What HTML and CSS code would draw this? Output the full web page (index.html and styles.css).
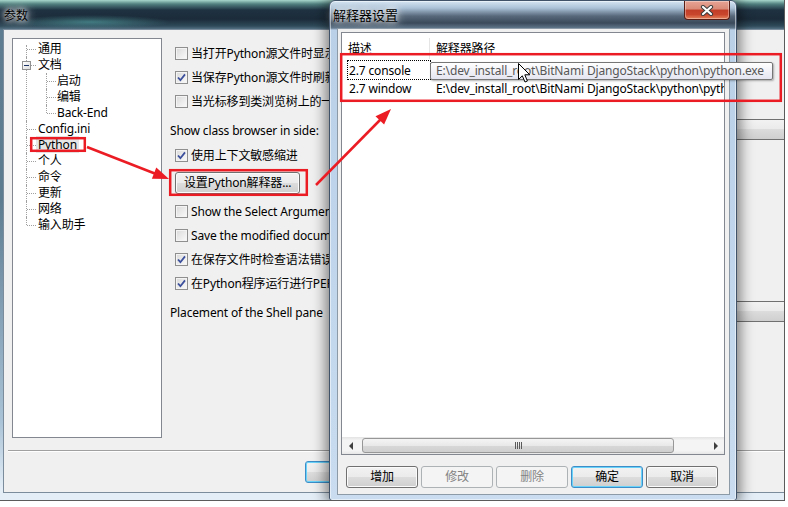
FILE: index.html
```html
<!DOCTYPE html>
<html lang="zh-CN">
<head>
  <meta charset="UTF-8">
  <title>参数 – 解释器设置</title>
  <link rel="stylesheet" href="styles.css">
</head>
<body>

  <div class="desktop">

    <!-- 主窗口：参数 -->
    <div class="window main-window">
      <div class="titlebar">
        <span class="title">参数</span>
      </div>
      <div class="client">
        <div class="panes">

          <!-- 左侧设置树 -->
          <div class="tree">
            <ul class="tree-root">
              <li><span class="label">通用</span></li>
              <li>
                <span class="expander"></span>
                <span class="label">文档</span>
                <ul class="tree-children">
                  <li><span class="label">启动</span></li>
                  <li><span class="label">编辑</span></li>
                  <li><span class="label">Back-End</span></li>
                </ul>
              </li>
              <li><span class="label">Config.ini</span></li>
              <li><span class="label selected">Python</span></li>
              <li><span class="label">个人</span></li>
              <li><span class="label">命令</span></li>
              <li><span class="label">更新</span></li>
              <li><span class="label">网络</span></li>
              <li><span class="label">输入助手</span></li>
            </ul>
          </div>

          <!-- 右侧 Python 选项 -->
          <div class="options">
            <div class="check"><span class="box"></span>当打开Python源文件时显示类浏览窗口</div>
            <div class="check"><span class="box"><svg viewBox="0 0 11 11"><path d="M2 5.5 L4.4 8.2 L9 2.4"/></svg></span>当保存Python源文件时刷新类浏览窗口</div>
            <div class="check"><span class="box"></span>当光标移到类浏览树上的一个节点时显示提示</div>
            <div class="field">
              <span>Show class browser in side:</span>
              <span class="combo"></span>
            </div>
            <div class="check"><span class="box"><svg viewBox="0 0 11 11"><path d="M2 5.5 L4.4 8.2 L9 2.4"/></svg></span>使用上下文敏感缩进</div>
            <button class="btn btn-wide">设置Python解释器...</button>
            <div class="check"><span class="box"></span>Show the Select Arguments dialog</div>
            <div class="check"><span class="box"></span>Save the modified documents before running</div>
            <div class="check"><span class="box"><svg viewBox="0 0 11 11"><path d="M2 5.5 L4.4 8.2 L9 2.4"/></svg></span>在保存文件时检查语法错误</div>
            <div class="check"><span class="box"><svg viewBox="0 0 11 11"><path d="M2 5.5 L4.4 8.2 L9 2.4"/></svg></span>在Python程序运行进行PEP8检查</div>
            <div class="field">
              <span>Placement of the Shell pane</span>
              <span class="combo"></span>
            </div>
          </div>
        </div>

        <div class="separator"></div>
        <div class="footer">
          <button class="btn default">确定</button>
          <button class="btn">取消</button>
          <button class="btn">应用</button>
        </div>
      </div>
    </div>

    <!-- 对话框：解释器设置 -->
    <div class="window dialog">
      <div class="titlebar">
        <span class="title">解释器设置</span>
        <span class="close">
          <svg viewBox="0 0 14 11" width="14" height="11">
            <path class="x-outline" d="M3 2 L11 9 M11 2 L3 9"/>
            <path class="x-fill" d="M3 2 L11 9 M11 2 L3 9"/>
          </svg>
        </span>
      </div>
      <div class="client">
        <div class="list">
          <div class="list-header">
            <span class="col-name">描述</span>
            <span class="col-path">解释器路径</span>
          </div>
          <div class="list-body">
            <div class="row focused">
              <span class="col-name">2.7 console</span>
              <span class="col-path">E:\dev_install_root\BitNami DjangoStack\python\python.exe</span>
            </div>
            <div class="row">
              <span class="col-name">2.7 window</span>
              <span class="col-path">E:\dev_install_root\BitNami DjangoStack\python\pythonw.exe</span>
            </div>
          </div>
          <div class="hscroll">
            <span class="arrow arrow-left"></span>
            <span class="track"><span class="thumb"><span class="grip"></span></span></span>
            <span class="arrow arrow-right"></span>
          </div>
        </div>
        <div class="dialog-buttons">
          <button class="btn">增加</button>
          <button class="btn" disabled>修改</button>
          <button class="btn" disabled>删除</button>
          <button class="btn default">确定</button>
          <button class="btn">取消</button>
        </div>
      </div>
    </div>

    <!-- 悬停提示和鼠标 -->
    <div class="tooltip">E:\dev_install_root\BitNami DjangoStack\python\python.exe</div>
    <svg class="cursor" width="13" height="20" viewBox="0 0 13 20">
      <path d="M0.5 0.5 L0.5 16.5 L4.3 12.8 L7 19 L9.4 18 L6.8 11.8 L11.8 11.8 Z"/>
    </svg>

    <!-- 红色标注 -->
    <svg class="annotations" width="784" height="500" viewBox="0 0 784 500">
      <rect x="31.2" y="138.2" width="53.6" height="12.6"/>
      <rect x="170.2" y="170.2" width="136.6" height="24.6"/>
      <rect x="341.2" y="54.2" width="439.6" height="46.6"/>
      <line x1="87" y1="147" x2="156" y2="174"/>
      <polygon points="169,179 151.9,178.8 156.3,167.6"/>
      <line x1="316" y1="185" x2="381" y2="119"/>
      <polygon points="391,109 384.1,124.6 375.5,116.2"/>
    </svg>

  </div>

</body>
</html>
```

FILE: styles.css
```css
body {
  margin: 0;
  background-color: #ffffff;
  font-family: "Noto Sans", "Noto Sans CJK SC", sans-serif;
  font-size: 12px;
  letter-spacing: -0.15px;
  color: #000000;
}

.desktop {
  position: relative;
  width: 784px;
  height: 500px;
  overflow: hidden;
  border-right: 1px solid #5b5b5b;
  border-bottom: 1px solid #5b5b5b;
  background-color: #1a2a36;
}

/* Aero 窗口 */
.window {
  position: absolute;
  display: flex;
  flex-direction: column;
  box-sizing: border-box;
}

.titlebar {
  display: flex;
  align-items: center;
  flex-shrink: 0;
}

.title {
  color: #000000;
  letter-spacing: 0;
  text-shadow: 0 0 5px #ffffff, 0 0 9px rgba(255, 255, 255, 0.85), 0 0 13px rgba(255, 255, 255, 0.6);
}

.main-window {
  left: 0;
  top: 0;
  width: 800px;
  height: 500px;
  padding: 0 3px 7px 3px;
  background:
    radial-gradient(80px 7px at 90px 22px, rgba(90, 175, 175, 0.55), transparent),
    linear-gradient(to bottom, #a8d8cc 0, #51807f 4px, #1f3242 10px, #1b2b39 19px, #2f4a5a 26px, #5f7d90 30px, #5d7c90 200px, #a9c2d6 420px, #e4eef7 490px);
}

.main-window .titlebar {
  height: 29px;
  margin: 0 -3px;
  padding-left: 4px;
}

.main-window .client {
  flex: 1;
  display: flex;
  flex-direction: column;
  border: 1px solid #7b8c9c;
  background-color: #f0f0f0;
}

.panes {
  display: flex;
  gap: 8px;
  padding: 8px 0 0 8px;
}

/* 设置树 */
.tree {
  width: 150px;
  height: 400px;
  box-sizing: border-box;
  flex-shrink: 0;
  border: 1px solid #828790;
  background-color: #ffffff;
}

.tree ul {
  list-style: none;
  margin: 0;
  padding: 0;
}

.tree-root {
  padding-top: 2px !important;
}

.tree li {
  position: relative;
  line-height: 16px;
  white-space: nowrap;
}

.tree-root > li {
  padding-left: 25px;
}

.tree-root > li::before {
  content: "";
  position: absolute;
  left: 13px;
  top: 0;
  bottom: 0;
  border-left: 1px dotted #a0a0a0;
}

.tree-root > li:first-child::before {
  top: 4px;
}

.tree-root > li:last-child::before {
  bottom: auto;
  height: 8px;
}

.tree-root > li::after {
  content: "";
  position: absolute;
  left: 14px;
  top: 8px;
  width: 9px;
  border-top: 1px dotted #a0a0a0;
}

.tree-children > li {
  padding-left: 19px;
}

.tree-children > li::before {
  content: "";
  position: absolute;
  left: 8px;
  top: 0;
  bottom: 0;
  border-left: 1px dotted #a0a0a0;
}

.tree-children > li:last-child::before {
  bottom: auto;
  height: 8px;
}

.tree-children > li::after {
  content: "";
  position: absolute;
  left: 9px;
  top: 8px;
  width: 9px;
  border-top: 1px dotted #a0a0a0;
}

.tree-children {
  margin-left: -25px !important;
  padding-left: 25px !important;
}

.expander {
  position: absolute;
  left: 9px;
  top: 4px;
  z-index: 1;
  width: 9px;
  height: 9px;
  box-sizing: border-box;
  border: 1px solid #919191;
  background: linear-gradient(135deg, #ffffff, #dcdcdc);
}

.expander::after {
  content: "";
  position: absolute;
  left: 1px;
  top: 3px;
  width: 5px;
  height: 1px;
  background-color: #1d3466;
}

.label.selected {
  margin-left: -2px;
  padding: 0 2px;
  background-color: #e6e6e6;
}

/* 选项区 */
.options {
  flex: 1;
  min-width: 0;
  display: flex;
  flex-direction: column;
  align-items: flex-start;
  padding-top: 3px;
}

.check {
  display: flex;
  align-items: center;
  height: 24px;
  padding-left: 5px;
  white-space: nowrap;
}

.box {
  width: 13px;
  height: 13px;
  box-sizing: border-box;
  flex-shrink: 0;
  margin-right: 3px;
  border: 1px solid #8f8f8f;
  background: linear-gradient(135deg, #d9d9d9, #fbfbfb);
  box-shadow: inset 0 0 0 1px #f4f4f4;
}

.box svg {
  display: block;
  width: 11px;
  height: 11px;
  fill: none;
  stroke: #3b4f9c;
  stroke-width: 1.8;
}

.field {
  display: flex;
  justify-content: space-between;
  align-items: flex-start;
  align-self: stretch;
  height: 24px;
  margin-top: 6px;
  line-height: 24px;
  white-space: nowrap;
}

.combo {
  width: 240px;
  height: 21px;
  box-sizing: border-box;
  border: 1px solid #707070;
  border-radius: 3px;
  background: linear-gradient(to bottom, #f2f2f2 0%, #ebebeb 45%, #dddddd 45%, #cfcfcf 100%);
}

/* 按钮 */
.btn {
  height: 22px;
  min-width: 75px;
  box-sizing: border-box;
  padding: 0 8px;
  border: 1px solid #707070;
  border-radius: 3px;
  background: linear-gradient(to bottom, #f2f2f2 0%, #ebebeb 50%, #dddddd 50%, #cfcfcf 100%);
  box-shadow: inset 0 0 0 1px #fbfbfb;
  font: inherit;
  letter-spacing: inherit;
  line-height: 18px;
  color: #000000;
}

.btn.default {
  border-color: #3c8dc8;
  box-shadow: inset 0 0 0 1px #6ad3fa;
}

.btn:disabled {
  border-color: #adb2b5;
  background: #f4f4f4;
  box-shadow: none;
  color: #838383;
}

.btn-wide {
  min-width: 0;
  margin: 5px 0 5px 5px;
}

.separator {
  height: 1px;
  margin: 12px 0 0 4px;
  background-color: #a0a0a0;
  border-bottom: 1px solid #ffffff;
}

.footer {
  display: flex;
  gap: 6px;
  padding: 9px 0 0 301px;
}

/* 对话框 */
.dialog {
  left: 329px;
  top: 0;
  width: 408px;
  height: 501px;
  border: 1px solid #3f5268;
  border-radius: 6px 6px 3px 3px;
  background: linear-gradient(to bottom, #d6e5f3 0, #abc2d7 7px, #58697b 15px, #3a4a5b 22px, #5f768a 27px, #b9d0e7 29px, #c9dcf0 100%);
  box-shadow: 0 0 14px 3px rgba(0, 0, 0, 0.5), inset 0 0 0 1px rgba(255, 255, 255, 0.5);
}

.dialog .titlebar {
  height: 27px;
  padding-left: 3px;
}

.dialog .title {
  font-size: 13px;
}

.close {
  align-self: flex-start;
  display: flex;
  align-items: center;
  justify-content: center;
  width: 46px;
  height: 19px;
  box-sizing: border-box;
  margin: 0 6px 0 auto;
  border: 1px solid #5a1d15;
  border-top: none;
  border-radius: 0 0 4px 4px;
  background: linear-gradient(to bottom, #e7a495 0%, #d98a77 45%, #c23d27 50%, #c9462d 75%, #e4835c 100%);
  box-shadow: inset 0 0 0 1px rgba(255, 255, 255, 0.35);
}

.close path {
  fill: none;
  stroke-linecap: round;
}

.close .x-outline {
  stroke: #3d3d3d;
  stroke-width: 4.2;
}

.close .x-fill {
  stroke: #ffffff;
  stroke-width: 2.2;
}

.dialog .client {
  flex: 1;
  min-height: 0;
  display: flex;
  flex-direction: column;
  margin: 0 6px 5px 7px;
  padding: 3px 4px 6px 3px;
  border: 1px solid #8c9aa8;
  background-color: #f0f0f0;
}

/* 列表 */
.list {
  flex: 1;
  min-height: 0;
  display: flex;
  flex-direction: column;
  overflow: hidden;
  border: 1px solid #828790;
  background-color: #ffffff;
}

.list-header {
  display: flex;
  flex-shrink: 0;
  height: 26px;
  box-sizing: border-box;
  padding-top: 5px;
  line-height: 22px;
}

.list-header .col-name {
  width: 88px;
  box-sizing: border-box;
  border-right: 1px solid #e5e5e5;
  padding-left: 6px;
}

.list-header .col-path {
  padding-left: 6px;
}

.list-body {
  padding-top: 2px;
}

.row {
  display: flex;
  height: 18px;
  line-height: 19px;
  white-space: nowrap;
}

.row .col-name {
  position: relative;
  width: 87px;
  flex-shrink: 0;
  box-sizing: border-box;
  padding-left: 7px;
}

.row .col-path {
  padding-left: 7px;
}

.row.focused .col-name::after {
  content: "";
  position: absolute;
  left: 5px;
  right: -2px;
  top: -1px;
  bottom: -1px;
  border: 1px dotted #000000;
}

/* 水平滚动条 */
.hscroll {
  display: flex;
  flex-shrink: 0;
  height: 17px;
  margin-top: auto;
  background: linear-gradient(to bottom, #e3e3e3, #f4f4f4 20%, #f4f4f4 80%, #e6e6e6);
}

.arrow {
  width: 17px;
  display: flex;
  align-items: center;
  justify-content: center;
}

.arrow-left::before {
  content: "";
  border-top: 4px solid transparent;
  border-bottom: 4px solid transparent;
  border-right: 4px solid #404040;
}

.arrow-right::before {
  content: "";
  border-top: 4px solid transparent;
  border-bottom: 4px solid transparent;
  border-left: 4px solid #404040;
}

.track {
  flex: 1;
  display: flex;
  align-items: center;
  padding-left: 3px;
}

.thumb {
  display: flex;
  align-items: center;
  justify-content: center;
  width: 312px;
  height: 15px;
  box-sizing: border-box;
  border: 1px solid #979797;
  border-radius: 3px;
  background: linear-gradient(to bottom, #f4f4f4, #e9e9e9 50%, #d8d8d8 51%, #cfcfcf);
}

.grip {
  width: 7px;
  height: 7px;
  background: repeating-linear-gradient(to right, #5a5a5a 0 1px, transparent 1px 2px);
}

.dialog-buttons {
  display: flex;
  flex-shrink: 0;
  gap: 3px;
  margin-top: 11px;
  padding-left: 5px;
}

.dialog-buttons .btn {
  width: 72px;
  min-width: 0;
  padding: 0;
}

/* 叠加层 */
.tooltip {
  position: absolute;
  left: 430px;
  top: 62px;
  width: 343px;
  height: 18px;
  box-sizing: border-box;
  padding-left: 5px;
  border: 1px solid #767676;
  border-radius: 2px;
  background: linear-gradient(to bottom, #ffffff, #e4e5f0);
  box-shadow: 1px 1px 2px rgba(0, 0, 0, 0.3);
  line-height: 16px;
  color: #575757;
  white-space: nowrap;
}

.cursor {
  position: absolute;
  left: 518px;
  top: 63px;
  fill: #ffffff;
  stroke: #000000;
  stroke-width: 1;
}

.annotations {
  position: absolute;
  left: 0;
  top: 0;
  pointer-events: none;
}

.annotations rect,
.annotations line {
  fill: none;
  stroke: #ec1c24;
  stroke-width: 2.5;
}

.annotations polygon {
  fill: #ec1c24;
}
```
